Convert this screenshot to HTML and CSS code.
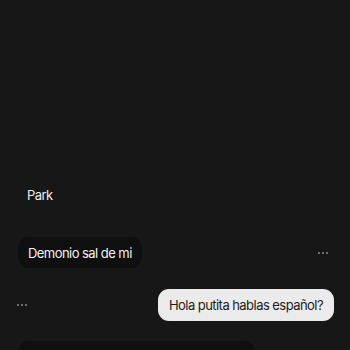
FILE: index.html
```html
<!DOCTYPE html>
<html>
<head>
<meta charset="utf-8">
<link rel="stylesheet" href="styles.css">
</head>
<body>
<div class="chat">
  <div class="row row-plain">
    <div class="bubble plain">Park</div>
  </div>
  <div class="row row-bot r2">
    <div class="bubble dark">Demonio sal de mi</div>
    <div class="dots dots-right"><i></i><i></i><i></i></div>
  </div>
  <div class="row row-user r3">
    <div class="dots dots-left"><i></i><i></i><i></i></div>
    <div class="bubble light">Hola putita hablas español?</div>
  </div>
  <div class="row row-bot r4">
    <div class="bubble dark wide">&nbsp;</div>
  </div>
</div>
</body>
</html>
```
FILE: styles.css
```css
html, body {
  margin: 0;
  padding: 0;
  background: #171717;
  height: 350px;
  overflow: hidden;
}
.chat {
  display: flex;
  flex-direction: column;
  padding: 179px 16px 0 18px;
  font-family: Inter, "Noto Sans", sans-serif;
  font-size: 13px;
  letter-spacing: -0.55px;
}
.row {
  display: flex;
  align-items: center;
  justify-content: space-between;
}
.r2 { margin-top: 27px; }
.r3 { margin-top: 21px; }
.r4 { margin-top: 20px; }
.bubble {
  padding: 6px 10px 5px;
  line-height: 20px;
  border-radius: 11px;
  white-space: nowrap;
}
.plain {
  color: #ededed;
  padding: 6px 9px 5px;
}
.dark {
  background: #0f0f0f;
  color: #f2f2f2;
}
.light {
  background: #ebebeb;
  color: #1c1c1c;
  padding: 6px 11px;
}
.wide {
  width: 217px;
  height: 40px;
}
.dots {
  display: flex;
  gap: 2px;
}
.dots i {
  width: 2px;
  height: 2px;
  background: #6e6e6e;
}
.dots-right { margin-right: 6px; }
.dots-left { margin-left: -1px; }
```
